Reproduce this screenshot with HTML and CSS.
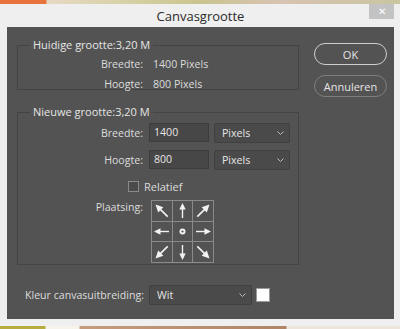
FILE: index.html
```html
<!DOCTYPE html>
<html lang="nl">
<head>
  <meta charset="UTF-8">
  <meta name="viewport" content="width=device-width, initial-scale=1.0">
  <title>Canvasgrootte</title>
  <link rel="stylesheet" href="styles.css">
</head>
<body>

  <div class="strook-boven"></div>

  <div class="venster">
    <div class="titelbalk">
      <span class="titel">Canvasgrootte</span>
      <span class="sluiten">&#x2715;</span>
    </div>

    <div class="paneel">
      <div class="links">
        <fieldset class="groep groep-huidig">
          <legend>Huidige grootte:3,20 M</legend>
          <div class="rij">
            <span class="label">Breedte:</span>
            <span class="waarde">1400 Pixels</span>
          </div>
          <div class="rij">
            <span class="label">Hoogte:</span>
            <span class="waarde">800 Pixels</span>
          </div>
        </fieldset>

        <fieldset class="groep groep-nieuw">
          <legend>Nieuwe grootte:3,20 M</legend>
          <div class="rij">
            <span class="label">Breedte:</span>
            <span class="invoer">1400</span>
            <span class="keuze">Pixels <svg class="pijltje" width="7" height="4" viewBox="0 0 7 4"><polyline points="0.5,0.5 3.5,3.5 6.5,0.5" fill="none" stroke="#bbb" stroke-width="1"/></svg></span>
          </div>
          <div class="rij">
            <span class="label">Hoogte:</span>
            <span class="invoer">800</span>
            <span class="keuze">Pixels <svg class="pijltje" width="7" height="4" viewBox="0 0 7 4"><polyline points="0.5,0.5 3.5,3.5 6.5,0.5" fill="none" stroke="#bbb" stroke-width="1"/></svg></span>
          </div>
          <div class="vinkje-rij">
            <span class="vinkje"></span>
            <span>Relatief</span>
          </div>
          <div class="rij rij-plaatsing">
            <span class="label">Plaatsing:</span>
            <svg class="anker" width="63" height="63" viewBox="0 0 63 63">
              <defs>
                <g id="pijl">
                  <line x1="0" y1="7" x2="0" y2="-3" stroke="#f2f2f2" stroke-width="1.4"/>
                  <polygon points="0,-8 -3.2,-1.5 3.2,-1.5" fill="#f2f2f2"/>
                </g>
              </defs>
              <g stroke="#8a8a8a" stroke-width="1" fill="none">
                <rect x="0.5" y="0.5" width="62" height="62"/>
                <line x1="21.5" y1="0" x2="21.5" y2="63"/>
                <line x1="41.5" y1="0" x2="41.5" y2="63"/>
                <line x1="0" y1="21.5" x2="63" y2="21.5"/>
                <line x1="0" y1="41.5" x2="63" y2="41.5"/>
              </g>
              <use href="#pijl" transform="translate(11 11) rotate(-45) scale(1.15)"/>
              <use href="#pijl" transform="translate(31.5 11)"/>
              <use href="#pijl" transform="translate(52 11) rotate(45) scale(1.15)"/>
              <use href="#pijl" transform="translate(11 31.5) rotate(-90)"/>
              <circle cx="31.5" cy="31.5" r="3" fill="#f2f2f2"/>
              <circle cx="31.5" cy="31.5" r="1.1" fill="#555"/>
              <use href="#pijl" transform="translate(52 31.5) rotate(90)"/>
              <use href="#pijl" transform="translate(11 52) rotate(-135) scale(1.15)"/>
              <use href="#pijl" transform="translate(31.5 52) rotate(180)"/>
              <use href="#pijl" transform="translate(52 52) rotate(135) scale(1.15)"/>
            </svg>
          </div>
        </fieldset>

        <div class="kleur-rij">
          <span>Kleur canvasuitbreiding:</span>
          <span class="keuze keuze-kleur">Wit <svg class="pijltje" width="7" height="4" viewBox="0 0 7 4"><polyline points="0.5,0.5 3.5,3.5 6.5,0.5" fill="none" stroke="#bbb" stroke-width="1"/></svg></span>
          <span class="staal"></span>
        </div>
      </div>

      <div class="knoppen">
        <button class="knop knop-ok">OK</button>
        <button class="knop">Annuleren</button>
      </div>
    </div>
  </div>

  <div class="strook-onder"></div>

</body>
</html>
```

FILE: styles.css
```css
:root {
  --paneel: #535353;
  --tekst: #dcdcdc;
  --rand: #444444;
  --veld: #464646;
}
body {
  margin: 0;
  background-color: #eeeeee;
  font-family: "Open Sans", "Noto Sans", Arial, sans-serif;
  font-size: 10.6px;
  color: var(--tekst);
  width: 400px;
  height: 329px;
  overflow: hidden;
}
.strook-boven {
  height: 4px;
  background: linear-gradient(to right, #e8743c 0, #e8743c 46px, #e6d9c4 47px, #d8d2a8 120px, #c9c48e 200px, #d8c2b2 280px, #c9c6a0 400px);
}
.venster {
  background-color: #efefef;
  padding: 0 6px 7px 7px;
}
.titelbalk {
  height: 23px;
  display: flex;
  align-items: center;
  justify-content: center;
  position: relative;
}
.titel {
  color: #2b2b2b;
  font-size: 13px;
}
.sluiten {
  position: absolute;
  right: 0;
  top: 0;
  width: 25px;
  height: 15px;
  background-color: #c3c3c3;
  color: #ffffff;
  font-size: 10px;
  line-height: 15px;
  text-align: center;
}
.paneel {
  background-color: var(--paneel);
  height: 292px;
  display: flex;
}
.links {
  width: 282px;
  padding: 11px 0 0 10px;
}
.groep {
  margin: 0;
  padding: 0;
  border: 1px solid var(--rand);
  min-width: 0;
}
.groep legend {
  padding: 0 3px;
  margin-left: 12px;
  color: #e6e6e6;
  font-size: 11px;
  line-height: 14px;
}
.groep-huidig {
  height: 48px;
  padding-top: 2px;
}
.groep-nieuw {
  margin-top: 15px;
  height: 158px;
}
.rij {
  display: grid;
  grid-template-columns: 126px 60px 76px;
  column-gap: 5px;
  align-items: center;
  height: 20px;
}
.groep-nieuw .rij {
  height: 27px;
}
.label {
  text-align: right;
  padding-right: 1px;
}
.waarde {
  grid-column: 2 / 4;
  padding-left: 4px;
}
.invoer {
  height: 17px;
  line-height: 17px;
  background-color: #474747;
  border: 1px solid #3c3c3c;
  padding-left: 4px;
  color: #e6e6e6;
}
.keuze {
  height: 18px;
  line-height: 18px;
  background-color: #4a4a4a;
  border: 1px solid #404040;
  border-radius: 2px;
  padding-left: 7px;
  color: #e6e6e6;
  display: flex;
  align-items: center;
  justify-content: space-between;
  padding-right: 5px;
}
.vinkje-rij {
  display: flex;
  align-items: center;
  gap: 5px;
  padding-left: 110px;
  height: 22px;
  margin-top: 2px;
  font-size: 11px;
}
.vinkje {
  width: 9px;
  height: 9px;
  border: 1px solid #8a8a8a;
  background-color: #4b4b4b;
}
.rij-plaatsing {
  height: auto;
  align-items: start;
  margin-top: 3px;
}
.anker {
  grid-column: 2 / 4;
  margin-left: 2px;
  display: block;
}
.kleur-rij {
  display: flex;
  align-items: center;
  margin-top: 20px;
  padding-left: 8px;
  height: 19px;
}
.keuze-kleur {
  width: 89px;
  margin-left: 5px;
}
.staal {
  width: 12px;
  height: 12px;
  background-color: #ffffff;
  border: 1px solid #9a9a9a;
  margin-left: 4px;
}
.knoppen {
  display: flex;
  flex-direction: column;
  gap: 10px;
  padding: 16px 0 0 15px;
}
.knop {
  width: 73px;
  height: 22px;
  border-radius: 11px;
  background-color: transparent;
  border: 1px solid #b8b8b8;
  color: #e4e4e4;
  font-family: inherit;
  font-size: 11px;
  padding: 0;
}
.knop-ok {
  border-color: #cfcfcf;
}
.knoppen .knop:last-child {
  border-color: #7e7e7e;
}
.strook-onder {
  height: 3px;
  background: linear-gradient(to right, #b7ad3e 0, #b7ad3e 45px, #f6f3ea 46px, #f6f3ea 79px, #c59c7c 80px, #b08567 286px, #ebe5dc 287px);
}
```
